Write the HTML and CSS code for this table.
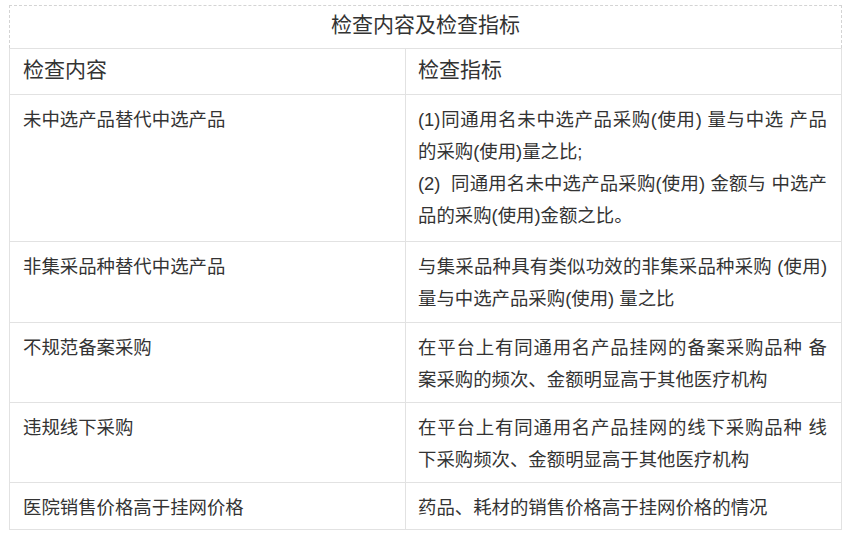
FILE: index.html
```html
<!DOCTYPE html>
<html lang="zh-CN">
<head>
<meta charset="utf-8">
<title>检查内容及检查指标</title>
<link rel="stylesheet" href="styles.css">
</head>
<body>
<div class="wrap">
<table class="tbl">
  <colgroup><col class="c1"><col class="c2"></colgroup>
  <thead>
    <tr class="title-row"><th colspan="2" class="title">检查内容及检查指标</th></tr>
    <tr class="head-row"><th>检查内容</th><th class="rc">检查指标</th></tr>
  </thead>
  <tbody>
    <tr class="r1">
      <td>未中选产品替代中选产品</td>
      <td class="rc"><span class="ln j">(1)同通用名未中选产品采购(使用) 量与中选 产品</span><span class="ln">的采购(使用)量之比;</span><span class="ln j">(2)&nbsp; 同通用名未中选产品采购(使用) 金额与 中选产</span><span class="ln">品的采购(使用)金额之比。</span></td>
    </tr>
    <tr class="r2">
      <td>非集采品种替代中选产品</td>
      <td class="rc"><span class="ln j">与集采品种具有类似功效的非集采品种采购 (使用)</span><span class="ln">量与中选产品采购(使用) 量之比</span></td>
    </tr>
    <tr class="r3">
      <td>不规范备案采购</td>
      <td class="rc"><span class="ln j">在平台上有同通用名产品挂网的备案采购品种 备</span><span class="ln">案采购的频次、金额明显高于其他医疗机构</span></td>
    </tr>
    <tr class="r4">
      <td>违规线下采购</td>
      <td class="rc"><span class="ln j">在平台上有同通用名产品挂网的线下采购品种 线</span><span class="ln">下采购频次、金额明显高于其他医疗机构</span></td>
    </tr>
    <tr class="r5">
      <td>医院销售价格高于挂网价格</td>
      <td class="rc"><span class="ln">药品、耗材的销售价格高于挂网价格的情况</span></td>
    </tr>
  </tbody>
</table>
</div>
</body>
</html>
```
FILE: styles.css
```css
html, body {
  margin: 0;
  padding: 0;
  background: #ffffff;
}
.wrap {
  padding: 5px 0 0 9px;
}
.tbl {
  width: 832px;
  border-collapse: collapse;
  table-layout: fixed;
  font-family: "Liberation Sans", "Noto Sans CJK SC", sans-serif;
  color: #333333;
}
.c1 { width: 396px; }
.c2 { width: 436px; }
.tbl th, .tbl td {
  border: 1px solid #e2e2e2;
  text-align: left;
  vertical-align: top;
  font-weight: normal;
}
.title-row .title {
  border-top: 1px dashed #d4d4d4;
  border-left: 1px dashed #d4d4d4;
  border-right: 1px dashed #d4d4d4;
  text-align: center;
  font-size: 21px;
  line-height: 28px;
  height: 38px;
  padding: 0 0 4px 0;
  vertical-align: middle;
}
.head-row th {
  font-size: 21px;
  line-height: 28px;
  height: 41px;
  padding: 0 13px 4px 13px;
  vertical-align: middle;
}
.tbl td {
  font-size: 18.4px;
  line-height: 32px;
  padding: 9px 13px 6px 13px;
  white-space: nowrap;
}
.tbl .rc {
  padding-left: 12px;
}
.ln {
  display: block;
}
.ln.j {
  width: 409px;
  white-space: normal;
  text-align: justify;
  text-align-last: justify;
  text-justify: inter-character;
}
.r1 td { padding-bottom: 9px; }
.r2 td { padding-bottom: 7px; }
.r3 td { padding-bottom: 6px; }
.r4 td { padding-bottom: 6px; }
.r5 td { padding-bottom: 5px; }
```
